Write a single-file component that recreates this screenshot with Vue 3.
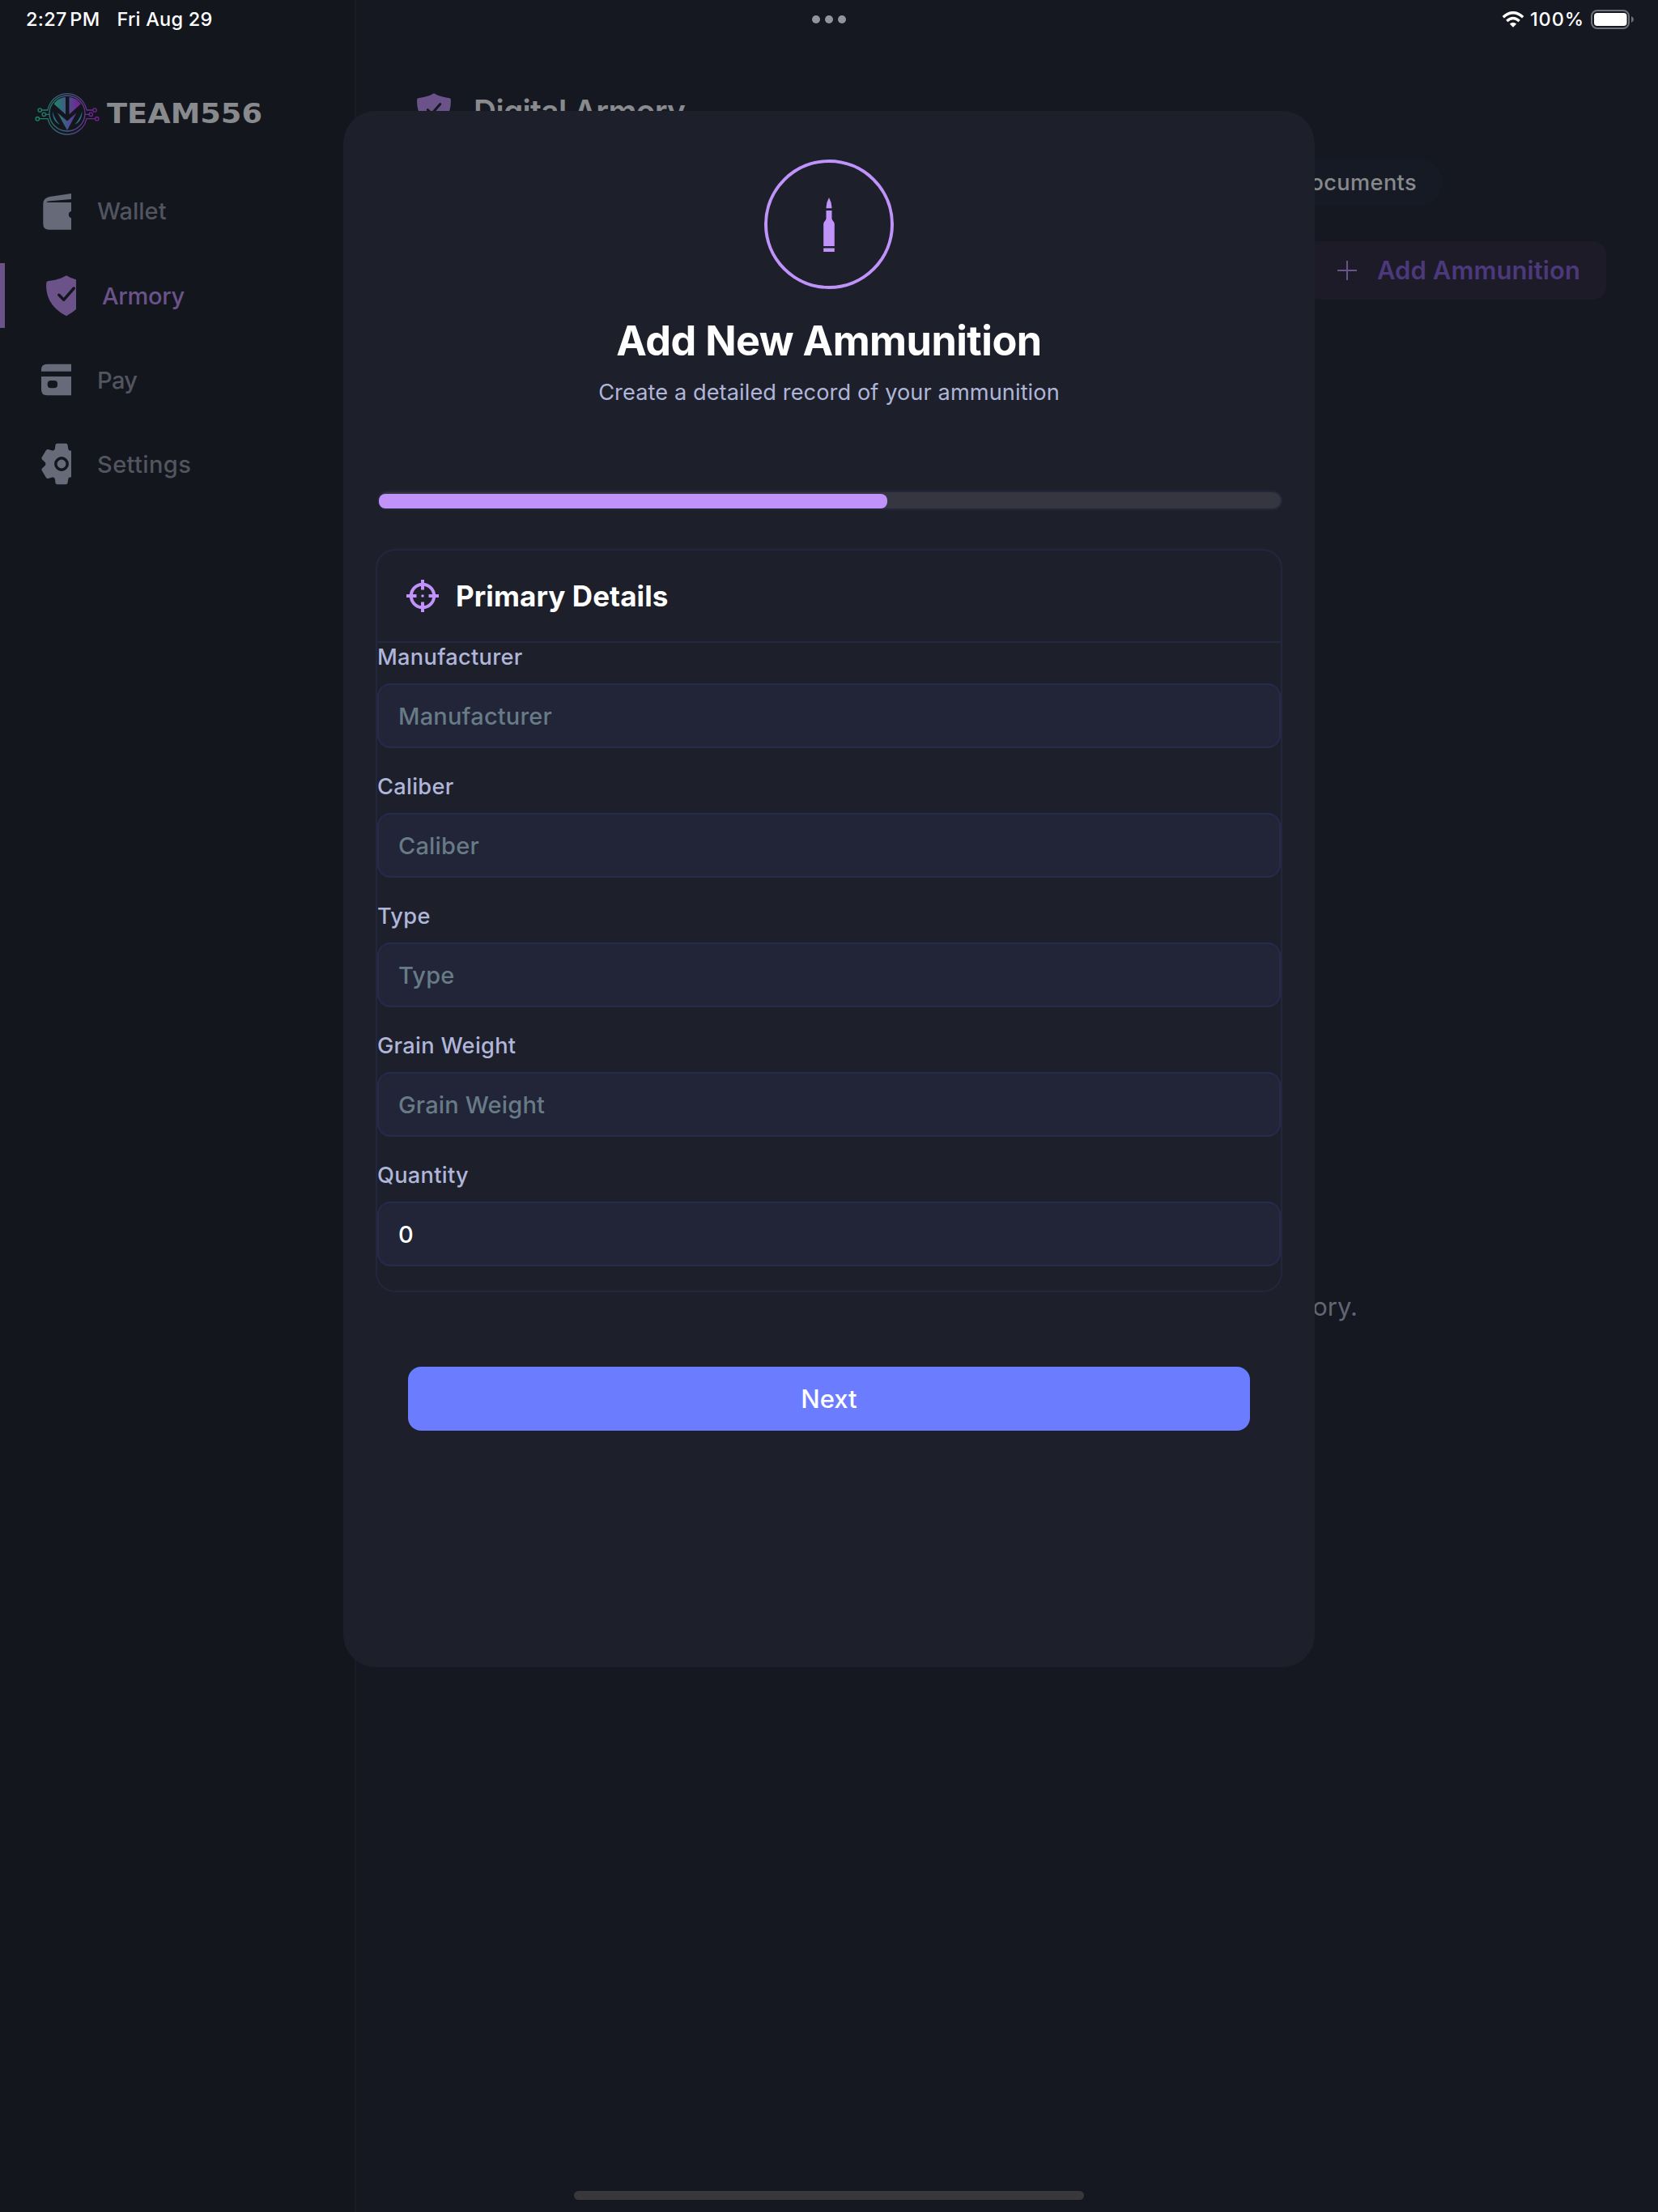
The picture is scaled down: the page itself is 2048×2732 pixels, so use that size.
<script setup>
const navItems = [
  { id: 'wallet', label: 'Wallet' },
  { id: 'armory', label: 'Armory', active: true },
  { id: 'pay', label: 'Pay' },
  { id: 'settings', label: 'Settings' },
]
const fields = [
  { label: 'Manufacturer', placeholder: 'Manufacturer', value: '' },
  { label: 'Caliber', placeholder: 'Caliber', value: '' },
  { label: 'Type', placeholder: 'Type', value: '' },
  { label: 'Grain Weight', placeholder: 'Grain Weight', value: '' },
  { label: 'Quantity', placeholder: '', value: '0' },
]
</script>

<template>
  <div class="screen">
    <aside class="sidebar">
      <div class="brand">
        <svg class="emblem" viewBox="40 108 86 64" fill="none">
          <defs>
            <linearGradient id="brandRing" x1="44" y1="0" x2="122" y2="0" gradientUnits="userSpaceOnUse">
              <stop offset="0" stop-color="#178a63" /><stop offset=".5" stop-color="#44567f" /><stop offset="1" stop-color="#7d1a96" />
            </linearGradient>
            <linearGradient id="brandDome" x1="66" y1="0" x2="100" y2="0" gradientUnits="userSpaceOnUse">
              <stop offset="0" stop-color="#1a8a66" /><stop offset=".5" stop-color="#45548c" /><stop offset="1" stop-color="#7d1a96" />
            </linearGradient>
            <linearGradient id="brandWing" x1="0" y1="137" x2="0" y2="154" gradientUnits="userSpaceOnUse">
              <stop offset="0" stop-color="#16648f" /><stop offset="1" stop-color="#2f7f80" />
            </linearGradient>
          </defs>
          <g stroke="url(#brandRing)" stroke-width="1.3">
            <path d="M60.5 131A24.5 25.5 0 0 1 105.500 131M61.500 153.500A25 25.500 0 0 0 104.500 153.500" />
            <circle cx="83" cy="140" r="22" />
            <circle cx="49.300" cy="136" r="2.200" /><circle cx="54.300" cy="141.300" r="2.200" /><circle cx="46.300" cy="146.700" r="2.200" />
            <circle cx="117" cy="136" r="2.200" /><circle cx="112.300" cy="141.300" r="2.200" /><circle cx="119.700" cy="146.700" r="2.200" />
            <path d="M51.500 136H58.800L60.500 131M56.500 141.300H61M48.500 146.700H59L61.500 153.500M114.800 136H107.200L105.500 131M110 141.300H105M117.500 146.700H107L104.500 153.500" />
          </g>
          <path fill="url(#brandDome)" d="M81 120C75 120.500 70 123 66.700 128.500L81 141.300ZM85.500 120C91 120.500 96.500 123 99.700 128.500L85.500 141.300Z" />
          <path fill="url(#brandDome)" d="M71 139.300L83 149.500L94.500 139.300L83 161Z" />
          <path fill="url(#brandWing)" d="M65 137.500C66.500 144 69 148.500 73.700 153.700C67.500 151 64.500 144.500 65 137.500ZM101.300 137.500C99.800 144 97 148.500 92.500 153.700C98.800 151 101.800 144.500 101.300 137.500Z" />
        </svg>
        <svg class="wordmark" viewBox="0 0 200 60"><text x="0" y="42" textLength="192" lengthAdjust="spacingAndGlyphs">TEAM556</text></svg>
      </div>
      <nav class="nav">
        <a v-for="item in navItems" :key="item.id" class="nav-item" :class="[item.id, { active: item.active }]">
          <svg v-if="item.id === 'wallet'" class="nav-icon" viewBox="48 231 40 60">
            <path d="M88 239L61 243Q53.300 244.500 53.300 252V276.500Q53.300 283.700 60.500 283.700H88V269.300A4.500 4.500 0 0 1 88 260.700V250H58Q57.500 248.700 59.500 248.400L88 246Z" />
          </svg>
          <svg v-else-if="item.id === 'armory'" class="nav-icon" viewBox="54 335 40 60">
            <path d="M82 340.300C76 344 67 346.500 59 347.300Q57.300 347.600 57.200 349.500C56 369 66 382 82 390.200Q88.500 386.800 94 382V345.300Q87.500 343.800 82 340.300Z" />
            <path class="cut" d="M72.800 364.300L78.700 370.300L91.300 356" />
          </svg>
          <svg v-else-if="item.id === 'pay'" class="nav-icon" viewBox="48 439 40 60">
            <path fill-rule="evenodd" d="M88 449.700H58Q51 449.700 51 456.700V458.700H88ZM51 465H88V488.300H58Q51 488.300 51 481.300ZM62.700 470Q58.700 470 58.700 474V475.300Q58.700 479.300 62.700 479.300H67Q71 479.300 71 475.300V474Q71 470 67 470Z" />
          </svg>
          <svg v-else class="nav-icon" viewBox="48 543 40 60">
            <path d="M70.700 547.700H81.300Q83.300 547.700 83.500 549.500L84.300 554.500Q84.800 556.700 88 556.700V589.300Q84.800 589.300 84.300 591.500L83.500 596.500Q83.300 598.300 81.300 598.300H70.700Q68.700 598.300 68.500 596.500L67.800 591.500Q67.200 589 64.500 589.600L59.500 591Q57.800 591.300 57 590L51.600 581Q50.800 579.500 52 578.400L55.700 575Q57.200 573 55.700 571L52 567.600Q50.800 566.500 51.600 565L57 556Q57.800 554.700 59.500 555L64.500 556.400Q67.200 557 67.800 554.500L68.500 549.500Q68.700 547.700 70.700 547.700Z" />
            <circle class="cut" cx="76" cy="573" r="7.200" />
          </svg>
          <span>{{ item.label }}</span>
        </a>
      </nav>
    </aside>

    <main class="main">
      <header class="page-header">
        <svg class="page-icon" viewBox="57 340 50 51">
          <path d="M82 340.300C76 344 67 346.500 59 347.300Q57.300 347.600 57.200 349.500C56 369 66 382 82 390.200C98 382 108 369 106.800 349.500Q106.700 347.600 105 347.300C97 346.500 88 344 82 340.300Z" />
          <path class="cut" d="M72.800 364.300L78.700 370.300L91.300 356" />
        </svg>
        <h1>Digital Armory</h1>
      </header>
      <div class="tabs"><span class="tab">Documents</span></div>
      <div class="actions">
        <button class="add-button">
          <svg viewBox="0 0 24 24"><path d="M12 0V24M0 12H24" /></svg>
          <span>Add Ammunition</span>
        </button>
      </div>
      <p class="empty">armory.</p>
    </main>

    <div class="status-bar">
      <div class="status-left"><span class="time">2:27 PM</span><span class="date">Fri Aug 29</span></div>
      <div class="dots"><i></i><i></i><i></i></div>
      <div class="status-right">
        <svg class="wifi" viewBox="0 0 28 20" fill="none" stroke="#fff">
          <path d="M1.800 7.200Q14 -3.800 26.200 7.200" stroke-width="3.400" /><path d="M6.300 12Q14 5.200 21.700 12" stroke-width="3.400" /><path d="M14 19.800L9.800 15.400Q14 12.200 18.200 15.400Z" fill="#fff" stroke="none" />
        </svg>
        <span class="percent">100%</span>
        <svg class="battery" viewBox="0 0 54 24">
          <rect x="1" y="1" width="46" height="22" rx="7" fill="none" stroke="#6f717a" stroke-width="2" />
          <rect x="4" y="4" width="40.500" height="16" rx="4" fill="#fff" /><path d="M50 8Q53 9.500 53 12T50 16Z" fill="#6f717a" />
        </svg>
      </div>
    </div>

    <section class="modal">
      <header class="modal-header">
        <div class="badge">
          <svg viewBox="0 0 14 67"><path d="M7 0Q10.300 5.500 10.500 13.300H3.500Q3.700 5.500 7 0ZM3.500 16H10.500V26Q11 28 12.500 29.500Q13.800 30.800 13.800 33V60H.2V33Q.2 30.800 1.500 29.500Q3 28 3.500 26ZM.2 62.500H13.800V67H.2Z" /></svg>
        </div>
        <h2>Add New Ammunition</h2>
        <p>Create a detailed record of your ammunition</p>
      </header>
      <div class="progress"><div class="progress-fill"></div></div>
      <div class="card">
        <div class="card-header">
          <svg viewBox="0 0 40 40"><circle cx="20" cy="20" r="14.200" /><path d="M20 0V12.500M20 27.500V40M0 20H12.500M27.500 20H40" /><circle class="dot" cx="20" cy="20" r="1.800" /></svg>
          <h3>Primary Details</h3>
        </div>
        <div v-for="f in fields" :key="f.label" class="field">
          <label>{{ f.label }}</label>
          <div class="input" :class="{ filled: f.value }">{{ f.value || f.placeholder }}</div>
        </div>
      </div>
      <button class="next">Next</button>
    </section>
    <div class="home-indicator"></div>
  </div>
</template>

<style>
body { margin: 0; background: #151820; }
</style>
<style scoped>
* { box-sizing: border-box; }
.screen { position: relative; display: flex; width: 2048px; height: 2732px; overflow: hidden; background: #151820; color: #fff; font-family: Inter, "Liberation Sans", sans-serif; }
h1, h2, h3, p { margin: 0; }
button { border: 0; padding: 0; font: inherit; }
.cut { fill: none; stroke: #13161d; stroke-width: 3.5; stroke-linecap: round; stroke-linejoin: round; }
.sidebar { width: 440px; flex: none; background: #13161d; border-right: 2px solid #191c26; padding-top: 108px; }
.brand { display: flex; align-items: center; height: 64px; padding-left: 40px; }
.emblem { width: 86px; height: 64px; }
.wordmark { width: 200px; height: 60px; margin-left: 6px; overflow: visible; }
.wordmark text { font: bold 33px "DejaVu Sans", sans-serif; fill: #898a8e; }
.nav { display: flex; flex-direction: column; gap: 24px; margin-top: 49px; }
.nav-item { display: flex; align-items: center; height: 80px; padding-left: 48px; gap: 32px; color: #52545f; font-size: 29px; font-weight: 500; }
.nav-icon { width: 40px; height: 60px; fill: #676b79; }
.nav-item.wallet span { padding-bottom: 1px; }
.nav-item.armory { letter-spacing: -0.3px; }
.nav-item.pay { letter-spacing: -0.6px; }
.nav-item.settings { letter-spacing: 0.4px; }
.nav-item.active { border-left: 6px solid #6b538a; color: #6b538a; }
.nav-item.active .nav-icon { fill: #6b538a; }
.main { flex: 1; padding: 115px 64px 0 74px; }
.page-header { display: flex; align-items: flex-start; height: 43px; gap: 28px; }
.page-icon { width: 42px; height: 43px; fill: #6b538a; margin-left: 1px; }
h1 { font-size: 38.8px; font-weight: 600; line-height: 44px; letter-spacing: -0.63px; color: #898a8e; }
.tabs { display: flex; justify-content: flex-end; margin: 38px 202px 0 0; }
.tab { height: 58px; line-height: 59px; padding: 0 32px; border-radius: 29px; background: #161a25; color: #87898c; font-size: 27.2px; font-weight: 500; letter-spacing: 0.36px; }
.actions { display: flex; justify-content: flex-end; margin-top: 44px; }
.add-button { display: flex; align-items: center; height: 72px; padding: 0 32px 0 40px; gap: 25px; border-radius: 16px; background: #1d1b28; color: #4b397b; font-size: 31px; font-weight: 600; letter-spacing: 0.08px; }
.add-button svg { width: 24px; height: 24px; stroke: #6b538a; stroke-width: 2; }
.add-button span { padding-bottom: 1px; }
.empty { margin: 1224px 307px 0 0; text-align: right; font-size: 31px; line-height: 40px; color: #626573; }
.status-bar { position: absolute; inset: 0 0 auto 0; height: 48px; display: flex; align-items: center; justify-content: space-between; font-size: 23.5px; font-weight: 500; }
.status-bar span { padding-bottom: 1px; }
.status-left { display: flex; width: 700px; padding-left: 32px; gap: 21px; }
.time { letter-spacing: 0.3px; word-spacing: -3px; }
.date { letter-spacing: 0.23px; }
.percent { letter-spacing: 0.9px; }
.dots { display: flex; gap: 6px; }
.dots i { width: 10px; height: 10px; border-radius: 50%; background: #91939e; }
.status-right { display: flex; align-items: center; justify-content: flex-end; width: 700px; padding-right: 29px; }
.wifi { width: 28px; height: 20px; margin-right: 7px; }
.battery { width: 54px; height: 24px; margin-left: 8px; }
.modal { position: absolute; left: 424px; top: 137px; width: 1200px; height: 1922px; padding: 60px 40px 0; border-radius: 40px; background: #1d1f2a; display: flex; flex-direction: column; align-items: stretch; }
.modal-header { display: flex; flex-direction: column; align-items: center; height: 409px; }
.badge { display: flex; align-items: center; justify-content: center; width: 160px; height: 160px; border: 4px solid #c093fb; border-radius: 50%; }
.badge svg { width: 14px; height: 67px; fill: #c093fb; }
h2 { margin-top: 32px; font-size: 50.4px; line-height: 64px; font-weight: 700; letter-spacing: -0.53px; }
.modal-header p { margin-top: 14px; font-size: 27.2px; line-height: 36px; letter-spacing: 0.08px; color: #b0b6d9; }
.progress { width: 1118px; height: 24px; margin-left: 2px; padding-top: 2px; border: 2px solid #24263a; border-radius: 12px; background: #353640; }
.progress-fill { width: 628px; height: 18px; border-radius: 8px; background: #c093fb; }
.card { margin-top: 48px; height: 918px; border: 2px solid #24263e; border-radius: 24px; }
.card-header { display: flex; align-items: center; height: 114px; padding-left: 36px; gap: 21px; border-bottom: 2px solid #25283f; }
.card-header svg { width: 40px; height: 40px; fill: none; stroke: #c093fb; stroke-width: 4; }
.card-header .dot { fill: #c093fb; stroke: none; }
h3 { font-size: 35px; font-weight: 700; letter-spacing: 0.09px; }
.field { display: flex; flex-direction: column; height: 160px; }
label { height: 50px; line-height: 35px; color: #b0b6d9; font-size: 27.2px; font-weight: 500; letter-spacing: 0.3px; }
.input { height: 80px; padding-left: 24px; line-height: 77px; border: 2px solid #272b4b; border-radius: 16px; background: #222437; color: #677b87; font-size: 29px; font-weight: 500; letter-spacing: 0.18px; }
.input.filled { color: #fff; }
.next { width: 1040px; height: 79px; margin: 92px auto 0; border-radius: 16px; background: #6b7cff; color: #fff; font-size: 31px; font-weight: 500; }
.home-indicator { position: absolute; left: 709px; bottom: 15px; width: 630px; height: 11px; border-radius: 6px; background: #38383b; }
</style>
